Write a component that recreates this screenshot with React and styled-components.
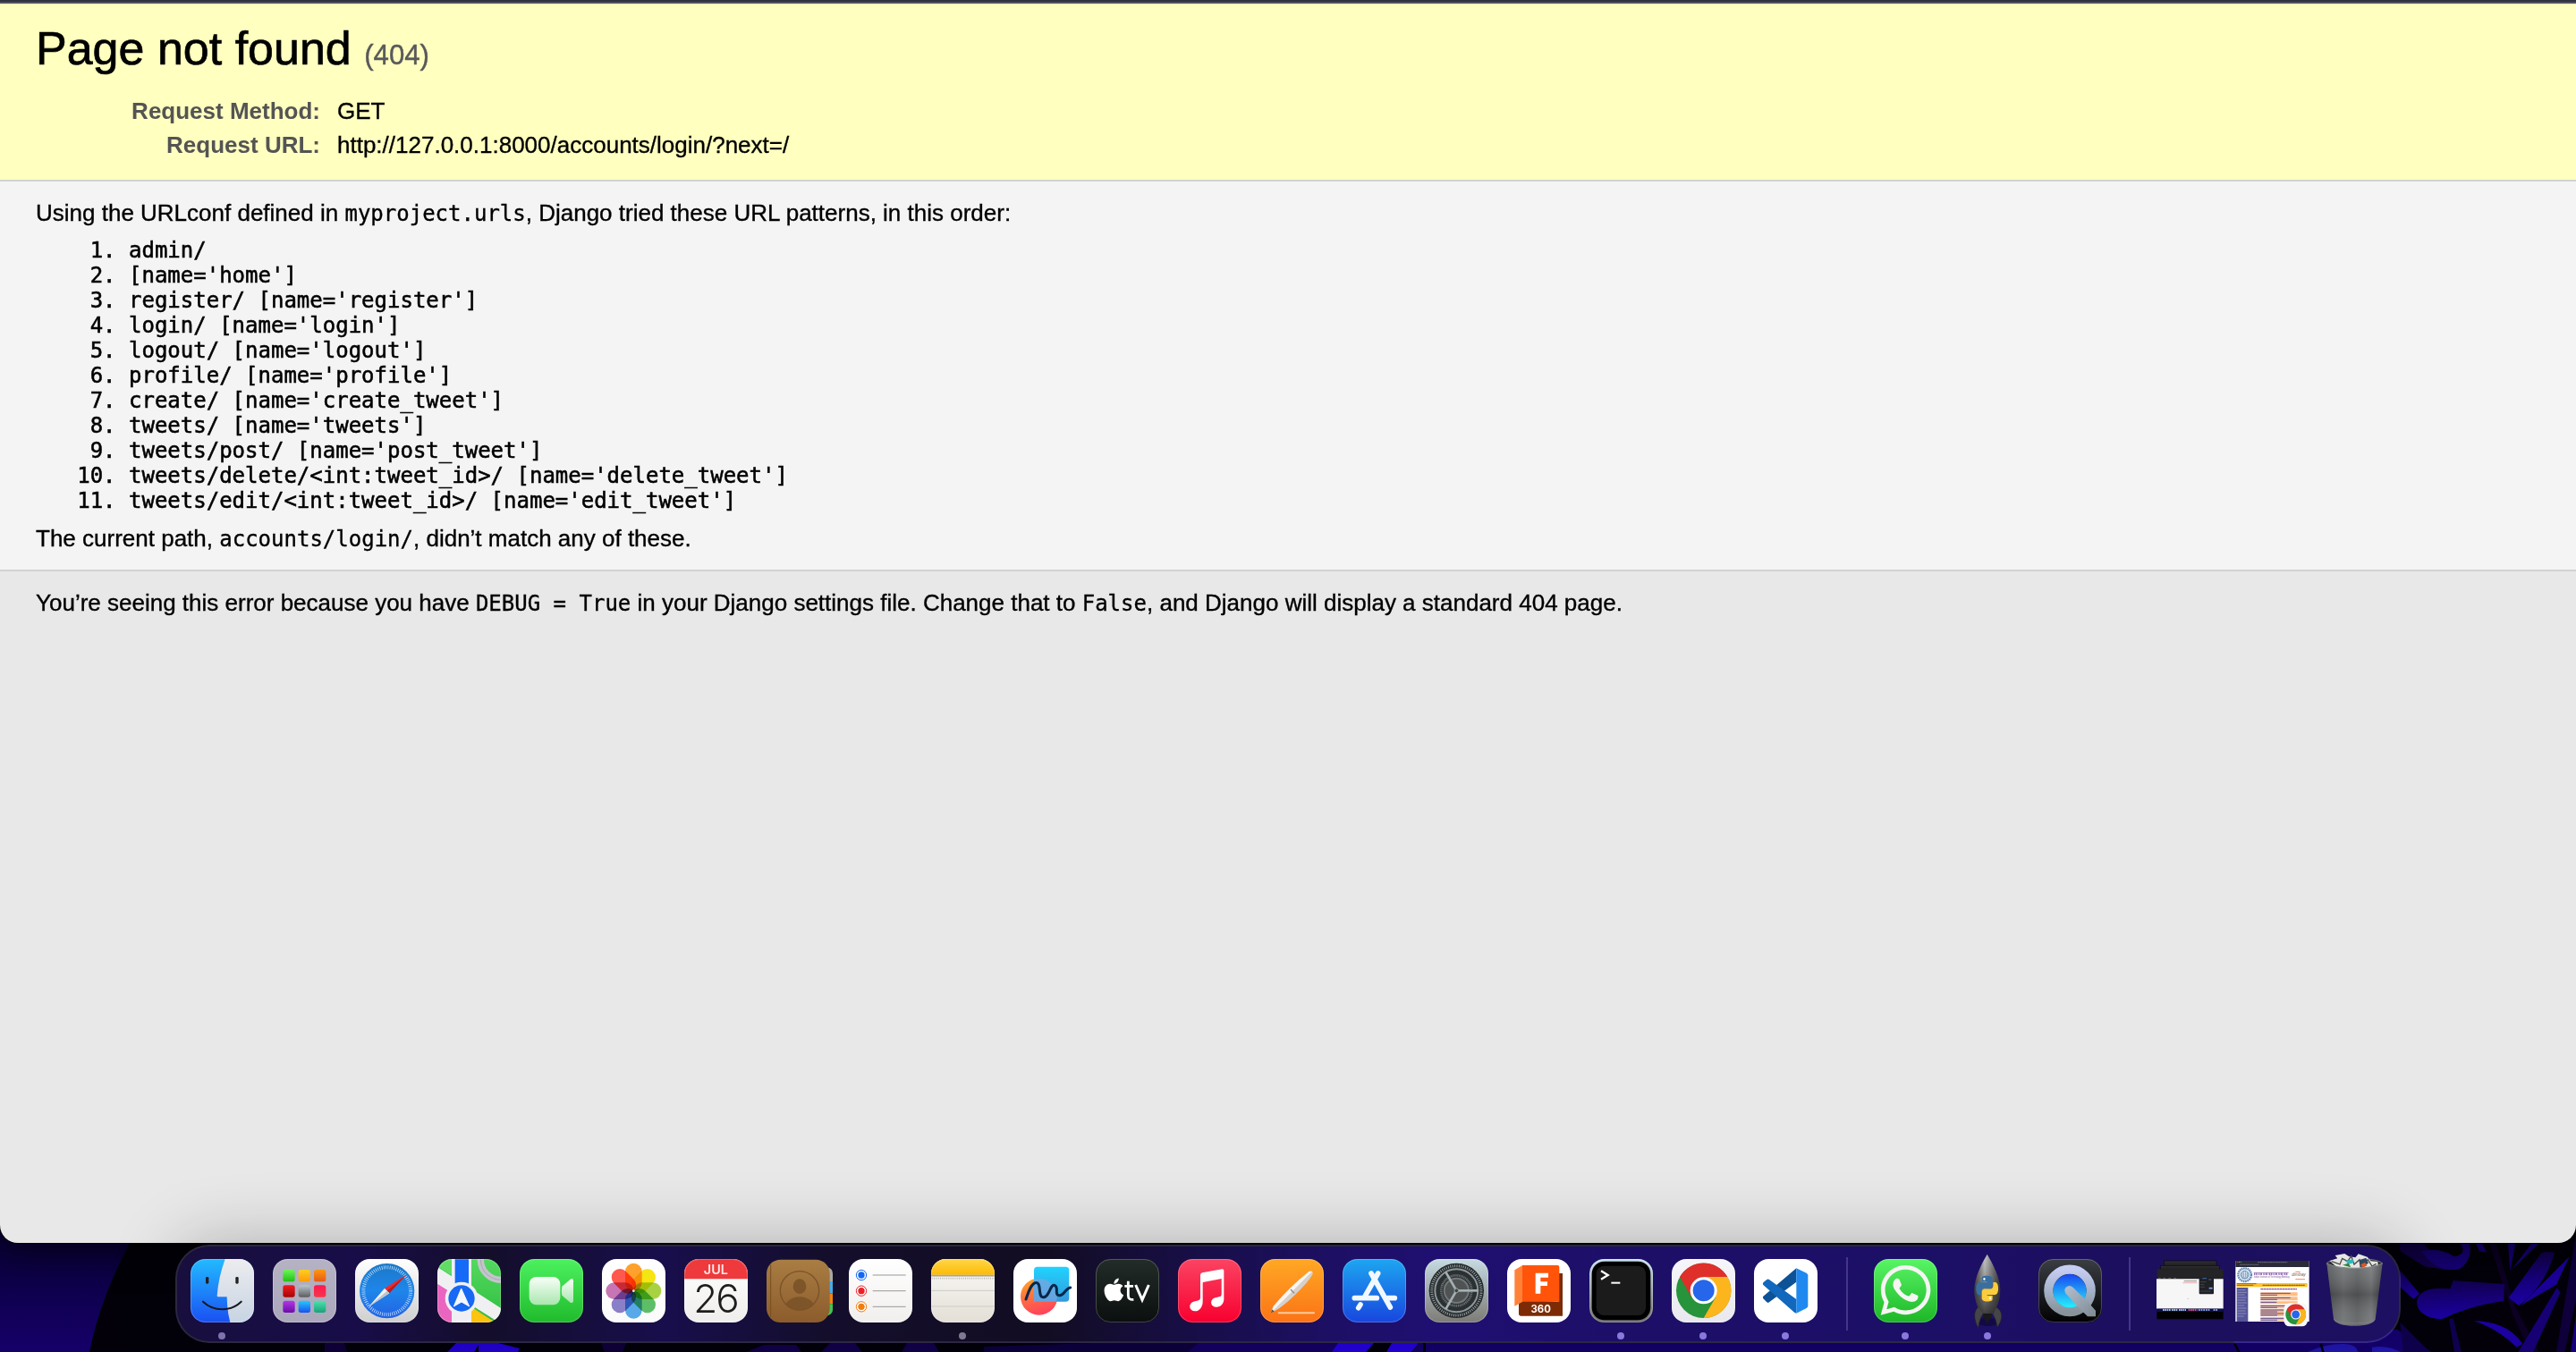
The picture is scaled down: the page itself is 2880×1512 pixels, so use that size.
import React from "react";
import styled, { createGlobalStyle } from "styled-components";
import { FaApple, FaWhatsapp } from "react-icons/fa";

const sans = `"Liberation Sans", Helvetica, Arial, sans-serif`;
const mono = `"DejaVu Sans Mono", Menlo, monospace`;

const Global = createGlobalStyle`
  * { box-sizing: border-box; margin: 0; padding: 0; }
  body { background: #000; font-family: ${sans}; }
`;

const Desktop = styled.div`
  position: relative;
  width: 2880px;
  height: 1512px;
  overflow: hidden;
  display: flex;
  flex-direction: column;
  align-items: center;
`;

const WallpaperSvg = styled.svg`
  position: absolute;
  left: 0;
  bottom: 0;
  display: block;
`;

const BrowserWindow = styled.main`
  position: relative;
  width: 100%;
  height: 1390px;
  overflow: hidden;
  border-radius: 0 0 20px 20px;
  background: #e8e8e8;
  color: #000;
  font-size: 26px;
  line-height: 30px;
  -webkit-text-stroke: 0.35px currentColor;
  box-shadow: 0 0 0 1px #000, 0 8px 40px rgba(0, 0, 0, 0.6);
`;

const ToolbarEdge = styled.div`
  height: 4px;
  background: #32333f;
  border-bottom: 2px solid #50515f;
`;

const Summary = styled.header`
  padding: 20px 40px;
  background: #ffffbf;
  border-bottom: 2px solid #d3d3d3;
`;

const Title = styled.h1`
  font-size: 52px;
  line-height: 60px;
  font-weight: 400;
  margin-bottom: 21px;
  -webkit-text-stroke-width: 0.7px;
`;

const Status = styled.span`
  font-size: 31.2px;
  line-height: 1;
  color: #59595b;
  -webkit-text-stroke: 0.4px #59595b;
`;

const Meta = styled.dl`
  display: grid;
  grid-template-columns: 318px 1fr;
  column-gap: 19px;
  line-height: 38px;
`;

const MetaName = styled.dt`
  color: #545454;
  font-weight: 700;
  text-align: right;
  -webkit-text-stroke: 0;
`;

const MetaValue = styled.dd`
  color: #000;
`;

const Info = styled.section`
  padding: 20px 40px;
  background: #f4f4f4;
  border-bottom: 2px solid #d3d3d3;
`;

const Explanation = styled.section`
  padding: 20px 40px;
`;

const Code = styled.code`
  font-family: ${mono};
  font-size: 24px;
  line-height: 1;
`;

const PatternList = styled.ol`
  margin: 13px 0;
  padding-left: 104px;
  font-family: ${mono};
  font-size: 24px;
  line-height: 28px;
  -webkit-text-stroke-width: 0.55px;
`;

const DockBar = styled.nav`
  position: relative;
  display: flex;
  width: 2488px;
  height: 110px;
  margin-top: 2px;
  padding: 0 4px;
  border: 2px solid rgba(140, 130, 200, 0.3);
  border-radius: 38px;
  background: linear-gradient(
    90deg,
    #180f3e 0%,
    #180d48 8%,
    #140e2b 14%,
    #180e4c 22%,
    #140e2c 29%,
    #120d22 39%,
    #180e48 46%,
    #1e0f68 53%,
    #1f0f72 57%,
    #1d0f68 65%,
    #1c0f66 80%,
    #1c0f5c 90%,
    #1d1062 100%
  );
  background-clip: padding-box;
  box-shadow: 0 -4px 76px rgba(0, 0, 0, 0.24);
`;

const Slot = styled.div`
  width: 92px;
  padding-top: 14px;
  display: flex;
  flex-direction: column;
  align-items: center;
  gap: 11px;
`;

const IconSvg = styled.svg`
  display: block;
  width: 71px;
  height: 71px;
  overflow: visible;
`;

const RunningDot = styled.i`
  width: 8px;
  height: 8px;
  border-radius: 50%;
  background: ${(p) => p.$tone};
`;

const Separator = styled.div`
  width: 42px;
  padding: 12px 0 0 ${(p) => p.$inset}px;
  &::before {
    content: "";
    display: block;
    width: 2px;
    height: 82px;
    background: #44358a;
  }
`;

const patterns = [
  "admin/",
  "[name='home']",
  "register/ [name='register']",
  "login/ [name='login']",
  "logout/ [name='logout']",
  "profile/ [name='profile']",
  "create/ [name='create_tweet']",
  "tweets/ [name='tweets']",
  "tweets/post/ [name='post_tweet']",
  "tweets/delete/<int:tweet_id>/ [name='delete_tweet']",
  "tweets/edit/<int:tweet_id>/ [name='edit_tweet']",
];

function Gradient({ id, from, to, mid, x2 = 0, y2 = 1 }) {
  return (
    <linearGradient id={id} x1="0" y1="0" x2={x2} y2={y2}>
      <stop offset="0" stopColor={from} />
      {mid && <stop offset=".5" stopColor={mid} />}
      <stop offset="1" stopColor={to} />
    </linearGradient>
  );
}

/* Rounded app tile; artwork is clipped to the tile when clip is set. */
function Tile({ id, x, from, to, clip, children }) {
  return (
    <IconSvg viewBox={`${x} 85 213 213`}>
      <defs>
        <Gradient id={`${id}-bg`} from={from} to={to} />
        <clipPath id={`${id}-clip`}>
          <rect x={x} y="85" width="213" height="213" rx="49" />
        </clipPath>
      </defs>
      <rect x={x} y="85" width="213" height="213" rx="49" fill={`url(#${id}-bg)`} />
      <g clipPath={clip ? `url(#${id}-clip)` : undefined}>{children}</g>
      <rect x={x + 1.5} y="86.5" width="210" height="210" rx="48" fill="none" stroke="#fff" strokeOpacity=".22" strokeWidth="3" />
    </IconSvg>
  );
}

const Finder = () => (
  <Tile id="finder" x={98} from="#22baff" to="#1a50f2" clip>
    <defs><Gradient id="finder-face" from="#ececef" to="#c7d4e2" /></defs>
    <path d="M214 85C200 125 190 165 187 208q0 4 4 4h29q0 45 11 86h81V85z" fill="url(#finder-face)" />
    <path d="M140 228c35 34 93 34 128 0" fill="none" stroke="#17191f" strokeWidth="6" strokeLinecap="round" />
    <rect x="149" y="145" width="10" height="23" rx="4" fill="#222" />
    <rect x="249" y="145" width="10" height="23" rx="4" fill="#222" />
  </Tile>
);

const launchColors = [
  ["#6df556", "#20c014"], ["#ffce1f", "#ff9a0a"], ["#ff960c", "#e5591b"],
  ["#f01b1f", "#a80307"], ["#b7c5cc", "#5b5d5f"], ["#ff1850", "#f5374c"],
  ["#b338e6", "#6b0da8"], ["#26c9ff", "#1950ef"], ["#4ce3ad", "#1ba178"],
];
const Launchpad = () => (
  <Tile id="launch" x={374} from="#b5b2c4" to="#aca8bb">
    {launchColors.map(([a, b], i) => (
      <g key={i}>
        <defs><Gradient id={`lp${i}`} from={a} to={b} /></defs>
        <rect x={408 + (i % 3) * 52} y={121 + Math.floor(i / 3) * 52} width="40" height="40" rx="8" fill={`url(#lp${i})`} />
      </g>
    ))}
  </Tile>
);

const Safari = () => (
  <Tile id="safari" x={649} from="#ffffff" to="#cfcfd1">
    <defs><Gradient id="saf" from="#1a78c8" mid="#1f86ea" to="#2361e4" /></defs>
    <circle cx="756" cy="192" r="92" fill="url(#saf)" />
    <circle cx="756" cy="192" r="79" fill="none" stroke="#cfeaff" strokeWidth="12" strokeDasharray="2.2 4.7" />
    <path d="M820 138L748 183l16 17z" fill="#ee2b30" />
    <path d="M820 138l-56 62-8-8z" fill="#b81c20" />
    <path d="M695 245l53-62 16 17z" fill="#f2f2f2" />
    <path d="M695 245l61-53 8 8z" fill="#bfc3c9" />
  </Tile>
);

const Maps = () => (
  <Tile id="maps" x={925} from="#54d95f" to="#2ebd3f" clip>
    <path d="M925 85h52v50l-10 0-42-28z" fill="#63dc66" />
    <path d="M925 166l60 35v97h-60z" fill="#ea65bf" />
    <path d="M1030 240l108 70h-108z" fill="#fcc30f" />
    <path d="M925 112l213 138v52L925 168z" fill="#f0f0f3" />
    <circle cx="1138" cy="87" r="68" fill="none" stroke="#c4c4cc" strokeWidth="22" />
    <circle cx="1138" cy="87" r="68" fill="none" stroke="#a9a9b2" strokeWidth="3" />
    <path d="M973 85h66v213h-66z" fill="#efeff3" />
    <path d="M984 85h46v90h-46z" fill="#156af8" />
    <circle cx="1006" cy="217" r="55" fill="#eff0f4" />
    <circle cx="1006" cy="217" r="44" fill="#1768f3" />
    <path d="M1005 184l27 60-26-15-26 15z" fill="#f5f7ff" stroke="#f5f7ff" strokeWidth="3" strokeLinejoin="round" />
  </Tile>
);

const FaceTime = () => (
  <Tile id="ft" x={1201} from="#4cf15e" to="#20bb2d">
    <defs><Gradient id="ft-cam" from="#f8fff8" to="#a9e6ae" /></defs>
    <rect x="1233" y="145" width="104" height="94" rx="24" fill="url(#ft-cam)" />
    <path d="M1343 177l28-24q9-5 10 5v68q-1 9-10 5l-28-24q-3-15 0-30z" fill="url(#ft-cam)" />
  </Tile>
);

const petals = ["#ff9a1c", "#f4e300", "#a3cf35", "#52b95c", "#4ba2e6", "#8076c4", "#c36aae", "#ff4b3f"];
const PetalGroup = styled.g`
  isolation: isolate;
  rect { mix-blend-mode: multiply; }
`;
const Photos = () => (
  <Tile id="photos" x={98} from="#ffffff" to="#fbfbfb">
    <PetalGroup>
      {petals.map((c, i) => (
        <rect key={c} x="176" y="99" width="56" height="93" rx="28" fill={c} fillOpacity=".93"
          transform={`rotate(${i * 45} 204 192)`} />
      ))}
    </PetalGroup>
    <circle cx="204" cy="192" r="4" fill="#f3ecdd" />
  </Tile>
);

const Calendar = () => (
  <Tile id="cal" x={374} from="#ffffff" to="#efeeec" clip>
    <path d="M374 85h213v67H374z" fill="#ee3a3c" />
    <text x="480" y="137" textAnchor="middle" fontFamily="Inter, sans-serif" fontSize="43" fontWeight="600" fill="#ffe9e9">JUL</text>
    <text x="479" y="266" textAnchor="middle" fontFamily="Inter, sans-serif" fontSize="132" fontWeight="300" letterSpacing="-6" fill="#1e1e1e">26</text>
  </Tile>
);

const Contacts = () => (
  <IconSvg viewBox="650 85 213 213">
    <defs>
      <Gradient id="con" from="#a97d43" to="#8c5c2c" />
      <clipPath id="con-c"><circle cx="761" cy="191" r="66" /></clipPath>
    </defs>
    <path d="M850 112q22 2 22 22v26h-22z" fill="#a9a9a2" />
    <path d="M850 160h22v40h-22z" fill="#47abe8" />
    <path d="M850 200h22v36h-22z" fill="#f2820f" />
    <path d="M850 236h22v20q0 16-22 20z" fill="#41c553" />
    <rect x="650" y="87" width="212" height="211" rx="47" fill="url(#con)" />
    <path d="M664 104v176" stroke="#755022" strokeWidth="3" />
    <g clipPath="url(#con-c)" fill="#7d5529">
      <ellipse cx="761" cy="177" rx="22" ry="25" />
      <ellipse cx="761" cy="258" rx="54" ry="46" />
    </g>
    <circle cx="761" cy="191" r="65" fill="none" stroke="#7a5328" strokeWidth="4" />
  </IconSvg>
);

const Reminders = () => (
  <Tile id="rem" x={925} from="#ffffff" to="#f1efed">
    {["#1467f5", "#ec2127", "#f27c0c"].map((c, i) => (
      <g key={c}>
        <circle cx="967" cy={139 + i * 53} r="17" fill="#fff" stroke={c} strokeWidth="3" />
        <circle cx="967" cy={139 + i * 53} r="11" fill={c} />
        <path d={`M1005 ${139 + i * 53}h111`} stroke="#999" strokeWidth="3" />
      </g>
    ))}
  </Tile>
);

const Notes = () => (
  <Tile id="notes" x={1201} from="#fbfaf8" to="#e3dfd6" clip>
    <defs><Gradient id="note-top" from="#ffd64a" to="#fdbb03" /></defs>
    <path d="M1201 85h213v53h-213z" fill="url(#note-top)" />
    <path d="M1201 141h213" stroke="#aaa290" strokeWidth="5" />
    <path d="M1203 150h213" stroke="#b7b4ae" strokeWidth="5" strokeDasharray="3 4" />
    <path d="M1201 191h213M1201 244h213" stroke="#cdcac5" strokeWidth="3" />
  </Tile>
);

const Freeform = () => (
  <Tile id="free" x={98} from="#ffffff" to="#ffffff">
    <defs>
      <Gradient id="ff-o" from="#ffad22" mid="#ff743f" to="#ff4759" x2={0.3} />
      <Gradient id="ff-b" from="#20d3ff" to="#3499dc" />
    </defs>
    <circle cx="184" cy="211" r="62" fill="url(#ff-o)" />
    <rect x="167" y="111" width="118" height="117" rx="12" fill="url(#ff-b)" />
    <path d="M167 152a62 62 0 0 1 75 76h-75z" fill="#7aa7e0" fillOpacity=".7" />
    <path d="M140 220c8-22 16-50 31-55 24-6 7 47 26 48 22 3 23-44 39-40 16 5-3 34 17 34 15 1 20-24 36-26" fill="none" stroke="#06284a" strokeWidth="9" strokeLinecap="round" strokeLinejoin="round" />
  </Tile>
);

const AppleTv = () => (
  <Tile id="tv" x={374} from="#222c28" to="#0b0f0f">
    <FaApple x="391" y="144" size={88} color="#fff" />
    <path d="M483 159v48q0 16 18 14M471 176h29" fill="none" stroke="#fff" strokeWidth="8.5" />
    <path d="M508 172l22 50 22-50" fill="none" stroke="#fff" strokeWidth="9" />
  </Tile>
);

const Music = () => (
  <Tile id="music" x={650} from="#fb4462" to="#f7002f">
    <path d="M725 139q0-6 6-8l67-12q6-1 6 5v96c0 14-10 26-25 26-19 0-23-20-10-29 8-5 17-4 24-7q3-2 3-8v-51l-62 12q-1 1-1 5v60c0 15-9 32-26 32-20 0-22-22-9-30 8-5 17-4 24-8q3-2 3-8z" fill="#fff" />
  </Tile>
);

const Pages = () => (
  <Tile id="pages" x={925} from="#ffa824" to="#fb7316">
    <path d="M960 266L969 243Q1024 178 1088 127q14-5 12 9-14 26-62 72-38 36-60 48z" fill="#f7f4f1" />
    <path d="M960 266l14-14L1098 128q4 3 2 8-14 26-62 72-38 36-60 48z" fill="#cdc7c4" fillOpacity=".8" />
    <path d="M1027 187l12 13" stroke="#8d8682" strokeWidth="4" />
    <path d="M960 266l5-12 7 7z" fill="#5a5048" />
    <path d="M987 266h118" stroke="#ffc99b" strokeWidth="6" strokeLinecap="round" />
  </Tile>
);

const AppStore = () => (
  <Tile id="store" x={1201} from="#1da6f1" to="#1846de">
    <g stroke="#f1f8ff" strokeWidth="17" strokeLinecap="round">
      <path d="M1297 133l64 114M1241 216h75M1352 216h24" />
      <path d="M1320 133l-45 79M1261 238l-7 11" />
    </g>
  </Tile>
);

const Settings = () => (
  <Tile id="set" x={98} from="#c6dbe2" to="#7d7b76">
    <circle cx="204" cy="191" r="92" fill="#252a2c" />
    <circle cx="204" cy="191" r="83" fill="none" stroke="#98a2a5" strokeWidth="9" strokeDasharray="3 4.24" />
    <circle cx="204" cy="191" r="72" fill="#2b3032" stroke="#8d979a" strokeWidth="6" />
    <circle cx="204" cy="191" r="51" fill="none" stroke="#73797a" strokeWidth="8" strokeDasharray="3 2.5" />
    <circle cx="204" cy="191" r="41" fill="#505353" stroke="#727879" strokeWidth="6" />
    <g fill="none" stroke="#a5b0b3" strokeWidth="8">
      {[0, 120, 240].map((a) => (
        <path key={a} d="M204 191h72" transform={`rotate(${a} 204 191)`} />
      ))}
    </g>
    <circle cx="204" cy="191" r="7" fill="#3d4243" stroke="#9ea7a9" strokeWidth="3" />
  </Tile>
);

const Fusion = () => (
  <Tile id="fus" x={374} from="#ffffff" to="#ffffff">
    <path d="M413 222v46q0 8 8 8h139V133h-14v95z" fill="#7c2b04" />
    <path d="M399 122l27-16v122l-27 15z" fill="#ff8238" />
    <path d="M425 106h118q6 0 6 6v116H425z" fill="#ff540a" />
    <path d="M469 132h43v15h-26v14h23v14h-23v26h-17z" fill="#fff" />
    <text x="487" y="264" textAnchor="middle" fontFamily="Inter, sans-serif" fontSize="34" fontWeight="700" fill="#fff">360</text>
  </Tile>
);

const Terminal = () => (
  <Tile id="term" x={650} from="#c7e0ec" to="#706d6a">
    <rect x="658" y="93" width="197" height="197" rx="42" fill="#000" />
    <rect x="673" y="108" width="166" height="166" rx="26" fill="#1b1b1b" />
    <path d="M689 125l23 14-23 14" fill="none" stroke="#fff" strokeWidth="7" />
    <path d="M723 165h30" stroke="#fff" strokeWidth="6" />
  </Tile>
);

/* Chrome roundel centred on 0,0 with radius 92. */
const ChromeMark = ({ transform }) => (
  <g transform={transform}>
    <circle r="92" fill="#27933b" />
    <path d="M-80-46A92 92 0 0 1 80-46H0L-40 23z" fill="#df2f2b" />
    <path d="M80-46A92 92 0 0 1 0 92L40 23 0-46z" fill="#fcb51c" />
    <circle r="45" fill="#fff" />
    <circle r="36" fill="#2566ea" />
  </g>
);
const Chrome = () => (
  <Tile id="chr" x={925} from="#f6f5fa" to="#e9e8ee">
    <ChromeMark transform="translate(1032 191)" />
  </Tile>
);

const VsCode = () => (
  <Tile id="vs" x={1201} from="#ffffff" to="#ffffff">
    <path d="M1232 210q-3 3 0 8l12 12q4 3 8 0l91-68v-46z" fill="#0d5196" />
    <path d="M1232 172q-3-3 0-8l12-10q4-3 8 0l91 66v47q-6-1-10-6z" fill="#1168bd" />
    <path d="M1343 116l34 16q5 3 5 8v102q0 5-5 8l-34 17z" fill="#2089ef" />
  </Tile>
);

const WhatsApp = () => (
  <Tile id="wa" x={165} from="#58f565" to="#1db627">
    <FaWhatsapp x="176" y="94" size={191} color="#f5f5f3" />
  </Tile>
);

const pyTop = "M14.25.18l.9.2.73.26.59.3.45.32.34.34.25.34.16.33.1.3.04.26.02.2-.01.13V8.5l-.05.63-.13.55-.21.46-.26.38-.3.31-.33.25-.35.19-.35.14-.33.1-.3.07-.26.04-.21.02H8.77l-.69.05-.59.14-.5.22-.41.27-.33.32-.27.35-.2.36-.15.37-.1.35-.07.32-.04.27-.02.21v3.06H3.17l-.21-.03-.28-.07-.32-.12-.35-.18-.36-.26-.36-.36-.35-.46-.32-.59-.28-.73-.21-.88-.14-1.05-.05-1.23.06-1.22.16-1.04.24-.87.32-.71.36-.57.4-.44.42-.33.42-.24.4-.16.36-.1.32-.05.24-.01h.16l.06.01h8.16v-.83H6.18l-.01-2.75-.02-.37.05-.34.11-.31.17-.28.25-.26.31-.23.38-.2.44-.18.51-.15.58-.12.64-.1.71-.06.77-.04.84-.02 1.27.05z";
const pyBottom = "M21.04 6.11l.28.06.32.12.35.18.36.27.36.35.35.47.32.59.28.73.21.88.14 1.04.05 1.23-.06 1.23-.16 1.04-.24.86-.32.71-.36.57-.4.45-.42.33-.42.24-.4.16-.36.09-.32.05-.24.02-.16-.01h-8.22v.82h5.84l.01 2.76.02.36-.05.34-.11.31-.17.29-.25.25-.31.24-.38.2-.44.17-.51.15-.58.13-.64.09-.71.07-.77.04-.84.01-1.27-.04-1.07-.14-.9-.2-.73-.25-.59-.3-.45-.33-.34-.34-.25-.34-.16-.33-.1-.3-.04-.25-.02-.2.01-.13v-5.34l.05-.64.13-.54.21-.46.26-.38.3-.32.33-.24.35-.2.35-.14.33-.1.3-.06.26-.04.21-.02.13-.01h5.84l.69-.05.59-.14.5-.21.41-.28.33-.32.27-.35.2-.36.15-.36.1-.35.07-.32.04-.28.02-.21V6.07h2.09z";

const Rocket = () => (
  <IconSvg viewBox="440 85 213 213">
    <defs>
      <linearGradient id="hull">
        <stop offset="0" stopColor="#3e3e40" />
        <stop offset=".4" stopColor="#c9c9ca" />
        <stop offset=".65" stopColor="#8c8c8e" />
        <stop offset="1" stopColor="#303032" />
      </linearGradient>
      <Gradient id="hull-shade" from="#55555500" to="#222222d0" />
    </defs>
    <ellipse cx="546" cy="296" rx="34" ry="14" fill="#120a45" />
    <path d="M514 246c-16 14-16 40 0 70q4-30 16-46zM574 246c24 14 24 40 4 68q-4-28-15-44z" fill="#454547" stroke="#222" strokeWidth="2" />
    <path d="M544 69c-20 34-42 78-43 118 0 34 11 62 26 81h34c16-19 27-47 27-81-1-40-24-84-44-118z" fill="url(#hull)" />
    <path d="M544 69c-20 34-42 78-43 118 0 34 11 62 26 81h34c16-19 27-47 27-81-1-40-24-84-44-118z" fill="url(#hull-shade)" />
    <path d="M530 268h29l-5 22h-5l-4 16-5-16h-5z" fill="#19191b" />
    <g transform="translate(507 141) scale(3.08 3.6)">
      <path d={pyTop} fill="#376fa0" />
      <path d={pyBottom} fill="#fbcd3d" />
      <circle cx="8.9" cy="3.1" r="1.1" fill="#fff" />
      <circle cx="15.2" cy="20.9" r="1.1" fill="#fff" />
    </g>
  </IconSvg>
);

const QuickTime = () => (
  <Tile id="qt" x={717} from="#3a3d42" to="#020203">
    <defs>
      <Gradient id="qt-r" from="#c5cdf2" mid="#a6b2c8" to="#87929b" />
      <Gradient id="qt-c" from="#1948f0" to="#27f0ff" />
      <linearGradient id="qt-t" x1="0" y1="0" x2="1" y2="1">
        <stop offset="0" stopColor="#b3bfce" /><stop offset="1" stopColor="#7e8a92" />
      </linearGradient>
    </defs>
    <circle cx="822" cy="191" r="71" fill="none" stroke="url(#qt-r)" strokeWidth="31" />
    <circle cx="822" cy="192" r="56" fill="url(#qt-c)" />
    <path d="M809 201q-8-13 0-21 12-10 24 0l50 50 8 8 18 20v20h-27l-22-22z" fill="url(#qt-t)" />
  </Tile>
);

const MinimizedStack = () => (
  <IconSvg viewBox="37 24 213 213">
    <defs><Gradient id="stk" from="#303033" to="#111112" /></defs>
    <rect x="56" y="30" width="176" height="30" fill="url(#stk)" stroke="#0b0b0c" strokeWidth="2" />
    <rect x="45" y="46" width="198" height="24" fill="url(#stk)" stroke="#0b0b0c" strokeWidth="2" />
    <rect x="33" y="58" width="222" height="34" fill="#242426" />
    <path d="M37 88h8m8 0h8m10 0h8m10 0h8" stroke="#777" strokeWidth="2" />
    <path d="M31 91h224v100H31z" fill="#f6f6f7" />
    <path d="M123 98h43" stroke="#777" strokeWidth="2.5" />
    <path d="M119 104h48" stroke="#e78b8b" strokeWidth="2" />
    <path d="M135 157h4" stroke="#aaa" strokeWidth="2" />
    <rect x="174" y="84" width="49" height="58" rx="3" fill="#202125" />
    <path d="M177 101h20m-20 9h14m-14 8h16m-16 14h36" stroke="#55565e" strokeWidth="2" />
    <path d="M207 122h12" stroke="#7fa5ee" strokeWidth="5" />
    <path d="M185 89h14m7 4h9" stroke="#3b6eb0" strokeWidth="3" />
    <path d="M32 191h223v35H32z" fill="#020204" />
    <path d="M32 191h223v10H32z" fill="#0d0d50" />
    <path d="M52 195h26m4 0h20m4 0h24" stroke="#a8c8d8" strokeWidth="6" strokeDasharray="5 2" />
    <path d="M138 195h30" stroke="#e0526c" strokeWidth="6" strokeDasharray="5 2" />
    <path d="M172 195h40m10 0h14" stroke="#8ba5dc" strokeWidth="6" strokeDasharray="5 3" />
  </IconSvg>
);

const MinimizedPage = () => (
  <IconSvg viewBox="313 24 213 213">
    <rect x="296" y="30" width="247" height="204" fill="#fff" />
    <path d="M296 30h247v21H296z" fill="#2a2b38" />
    <circle cx="302" cy="34" r="2" fill="#f45" /><circle cx="308" cy="34" r="2" fill="#fa3" /><circle cx="314" cy="34" r="2" fill="#3c5" />
    <path d="M370 35h100" stroke="#8d8e98" strokeWidth="2" strokeDasharray="6 1" />
    <path d="M310 43h64" stroke="#777885" strokeWidth="2" />
    <circle cx="327" cy="77" r="22" fill="#e3edf5" stroke="#6289b8" strokeWidth="7" strokeDasharray="5 2" />
    <circle cx="327" cy="77" r="13" fill="none" stroke="#5c84b2" strokeWidth="3" />
    <path d="M319 70v15m5-18v18m6-18v18m5-15v15M317 87h20" stroke="#5b7fae" strokeWidth="2" />
    <path d="M357 70h117" stroke="#8a67ac" strokeWidth="2" />
    <path d="M358 74h115" stroke="#9572b4" strokeWidth="8" strokeDasharray="3 2 5 3 2 2" />
    <text x="357" y="88" fontFamily={sans} fontSize="8" fill="#7953a0" textLength="120" lengthAdjust="spacingAndGlyphs">Indian Institute of Technology Bombay</text>
    <text x="485" y="82" fontFamily={sans} fontSize="16" fontStyle="italic" fill="#665" textLength="46" lengthAdjust="spacingAndGlyphs">dimbay</text>
    <path d="M497 67h16m-16 25h32" stroke="#f0875e" strokeWidth="3" />
    <path d="M300 105h237v13H300z" fill="#ffc42e" />
    <path d="M300 107h66m-66 5h56" stroke="#a05c24" strokeWidth="3" />
    <path d="M387 112h141" stroke="#876525" strokeWidth="4" strokeDasharray="7 1" />
    <path d="M300 120h38v114h-38z" fill="#55559a" />
    <path d="M302 128h28m-28 8h32m-32 8h25m-25 9h31m-31 9h28m-28 9h32m-32 9h24m-24 9h31m-31 9h28m-28 9h30m-30 9h22" stroke="#a9a9cc" strokeWidth="2" />
    <path d="M380 125h122" stroke="#8b4e95" strokeWidth="4" strokeDasharray="8 1" />
    {[136, 151, 166, 178, 192, 204, 220].map((y, i) => (
      <g key={y}>
        <path d={`M380 ${y}h124v${i === 2 ? 8 : 12}H380z`} fill="#ffbc82" />
        <path d={`M380 ${y + 3}h${i === 2 ? 54 : 100}M380 ${y + 9}h${i === 2 ? 0 : 56}`} stroke="#594e9c" strokeWidth="3" />
      </g>
    ))}
    <rect x="458" y="172" width="80" height="78" rx="19" fill="#f7f7fb" />
    <ChromeMark transform="translate(498 210) scale(.37)" />
  </IconSvg>
);

const Trash = () => (
  <IconSvg viewBox="589 24 213 213">
    <defs>
      <linearGradient id="bin">
        <stop offset="0" stopColor="#4c4f52" />
        <stop offset=".3" stopColor="#6c6f71" />
        <stop offset=".55" stopColor="#5a5d5f" />
        <stop offset=".8" stopColor="#707275" />
        <stop offset="1" stopColor="#3c3e42" />
      </linearGradient>
      <Gradient id="bin-shade" from="#ffffff20" mid="#22222240" to="#ffffff15" />
    </defs>
    <ellipse cx="695" cy="40" rx="93" ry="18" fill="#2c2d30" stroke="#777a7d" strokeWidth="3" />
    <path d="M612 30l26-8-8-10 32-6 14 9 22 4 10-12 30 10 12 14 23 2 2 20-44 14-80-2z" fill="#e6e6e3" />
    <path d="M618 32l28 10 8-20 18 10 12-18 10 28 18-16 8 24 20-24 14 22 14-8" fill="none" stroke="#4b4c4c" strokeWidth="4" />
    <path d="M664 30l26-5 2 12-18 5z" fill="#31b7bc" />
    <path d="M655 44l20-6 8 14z" fill="#29833d" />
    <path d="M710 28l24-8 8 18-28 16z" fill="#31495f" />
    <path d="M716 42l14-6 8 10-16 8z" fill="#d95827" />
    <path d="M602 38c36 22 150 22 187 0l-24 188c-5 30-135 30-140 0z" fill="url(#bin)" />
    <path d="M602 38c36 22 150 22 187 0l-24 188c-5 30-135 30-140 0z" fill="url(#bin-shade)" />
    <path d="M626 226c14 18 125 18 138 0" fill="none" stroke="#7e8183" strokeWidth="3" />
    <path d="M602 38c36 22 150 22 187 0" fill="none" stroke="#85888a" strokeWidth="3" />
  </IconSvg>
);

function Wallpaper() {
  return (
    <WallpaperSvg width="2880" height="152" viewBox="0 0 2880 152" aria-hidden="true">
      <defs>
        <Gradient id="wall-left" from="#07002c" to="#150069" />
        <Gradient id="wall-leaf" from="#12004f" to="#1c00a4" />
      </defs>
      <path d="M0 0h2880v152H0z" fill="#030009" />
      <path d="M0 0h160L145 30Q112 92 100 152H0z" fill="url(#wall-left)" />
      {/* slivers visible below the dock */}
      <path d="M363 142h22l3 10h-25zM672 142h28l-4 10h-20z" fill="#10003c" />
      <path d="M510 142h26l-6 10h-30zM535 142h22l24 6 -2 4h-44z" fill="#2300d8" />
      <path d="M834 152l20-8h36l6 8zM918 152l10-10h28l8 10zM1008 152l6-10h30l6 10z" fill="#12004c" />
      <path d="M1100 146l120-4h270v10h-390z" fill="#0e0040" />
      <path d="M1340 142h157l-7 10h-162z" fill="#150067" />
      <path d="M1496 142h40l-9 10h-38zM1556 142h30l-8 10h-28z" fill="#2500e2" />
      <path d="M1594 142h904l14 10h-918z" fill="#15006d" />
      <path d="M1586 142h5v10h-12z" fill="#15006d" />
      <g transform="translate(2400 0) scale(.33333)">
        <path d="M290 420H860L955 456H310zM840 380L955 456H300V420z" fill="#15006f" />
        <path d="M540 456q60-28 120-27 45 2 48 27zM756 440q52-8 96 16h-96z" fill="#2117b4" />
        <path d="M290 428l15 28h9l-14-28zM580 428l8 28h8l-8-28z" fill="#040010" />
        <path d="M850 92h80l75 88-70-10-85-52z" fill="#12004d" />
        <path d="M850 182l65 78-20 18-45-40z" fill="url(#wall-leaf)" />
        <path d="M922 118q60-16 110 18 45-10 20-44h30q14 50-32 86-80 14-128-60z" fill="#18007a" />
        <path d="M1104 92h22l14 30-24-4zM1212 92h25l-18 92zM1290 92h26l-90 86z" fill="#18007a" />
        <path d="M1150 92h22l62 208 82 156h-30l-60-130z" fill="#0c0024" />
        <path d="M1200 228l-172-12-10 28q-100-10-112 40 0 56 84 62 86-44 208-62z" fill="url(#wall-leaf)" />
        <path d="M1368 124q-24-8-44 0l-110 150 34 26q86-62 120-176z" fill="url(#wall-leaf)" />
        <path d="M1418 136l-164 164 120-70z" fill="#1c0098" />
        <path d="M1376 240l-130 216h50l92-200z" fill="#160074" />
        <path d="M1440 60l-30 182-36 214h28l38-180z" fill="#0f003c" />
        <path d="M1097 352q110 0 164 76l-20 12q-66-64-144-88z" fill="#1c00a0" />
        <path d="M1014 346l14-4 28 114h-24zM850 356l100 100h-90z" fill="#10004e" />
        <path d="M1440 330v126h-18z" fill="#17007c" />
      </g>
    </WallpaperSvg>
  );
}

const apps = [
  { name: "Finder", Icon: Finder, dot: "#7e73ac" },
  { name: "Launchpad", Icon: Launchpad },
  { name: "Safari", Icon: Safari },
  { name: "Maps", Icon: Maps },
  { name: "FaceTime", Icon: FaceTime },
  { name: "Photos", Icon: Photos },
  { name: "Calendar", Icon: Calendar },
  { name: "Contacts", Icon: Contacts },
  { name: "Reminders", Icon: Reminders },
  { name: "Notes", Icon: Notes, dot: "#7f7a94" },
  { name: "Freeform", Icon: Freeform },
  { name: "TV", Icon: AppleTv },
  { name: "Music", Icon: Music },
  { name: "Pages", Icon: Pages },
  { name: "App Store", Icon: AppStore },
  { name: "Settings", Icon: Settings },
  { name: "Fusion", Icon: Fusion },
  { name: "Terminal", Icon: Terminal, dot: "#8b78dc" },
  { name: "Chrome", Icon: Chrome, dot: "#8b78dc" },
  { name: "Code", Icon: VsCode, dot: "#8b78dc" },
];
const recents = [
  { name: "WhatsApp", Icon: WhatsApp, dot: "#8b78dc" },
  { name: "Python Launcher", Icon: Rocket, dot: "#8b78dc" },
  { name: "QuickTime", Icon: QuickTime },
];
const places = [
  { name: "Windows", Icon: MinimizedStack },
  { name: "Page", Icon: MinimizedPage },
  { name: "Trash", Icon: Trash },
];

const renderSlot = ({ name, Icon, dot }) => (
  <Slot key={name}>
    <Icon />
    {dot && <RunningDot $tone={dot} />}
  </Slot>
);

export default function App() {
  return (
    <Desktop>
      <Global />
      <Wallpaper />
      <BrowserWindow>
        <ToolbarEdge />
        <Summary>
          <Title>Page not found <Status>(404)</Status></Title>
          <Meta>
            <MetaName>Request Method:</MetaName>
            <MetaValue>GET</MetaValue>
            <MetaName>Request URL:</MetaName>
            <MetaValue>http://127.0.0.1:8000/accounts/login/?next=/</MetaValue>
          </Meta>
        </Summary>
        <Info>
          <p>
            Using the URLconf defined in <Code>myproject.urls</Code>, Django tried these URL patterns, in this order:
          </p>
          <PatternList>
            {patterns.map((p) => <li key={p}>{p}</li>)}
          </PatternList>
          <p>The current path, <Code>accounts/login/</Code>, didn’t match any of these.</p>
        </Info>
        <Explanation>
          <p>
            You’re seeing this error because you have <Code>DEBUG = True</Code> in your Django settings file. Change that to <Code>False</Code>, and Django will display a standard 404 page.
          </p>
        </Explanation>
      </BrowserWindow>
      <DockBar>
        {apps.map(renderSlot)}
        <Separator $inset={22} />
        {recents.map(renderSlot)}
        <Separator $inset={20} />
        {places.map(renderSlot)}
      </DockBar>
    </Desktop>
  );
}
